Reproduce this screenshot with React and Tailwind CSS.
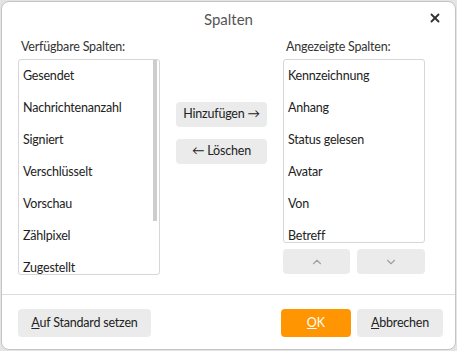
import { X, ChevronUp, ChevronDown } from "lucide-react";

const available = [
  "Gesendet",
  "Nachrichtenanzahl",
  "Signiert",
  "Verschlüsselt",
  "Vorschau",
  "Zählpixel",
  "Zugestellt",
];

const shown = ["Kennzeichnung", "Anhang", "Status gelesen", "Avatar", "Von", "Betreff"];

function Item({ label }) {
  return (
    <div className="h-[32px] shrink-0 flex items-center pl-[4px] text-[12.5px] tracking-[-0.2px] text-[#222] whitespace-nowrap">
      {label}
    </div>
  );
}

function GrayButton({ children, className = "" }) {
  return (
    <button
      className={
        "bg-[#ebebeb] rounded-[4px] text-[12.5px] tracking-[-0.2px] text-[#222] flex items-center justify-center " +
        className
      }
    >
      {children}
    </button>
  );
}

export default function App() {
  return (
    <div
      className="w-[457px] h-[351px] bg-[#e4e4e4] p-[1px]"
      style={{ fontFamily: 'Lato, "Noto Sans", sans-serif' }}
    >
      <div className="w-[455px] h-[349px] bg-white border border-[#c4c4c4] rounded-[8px] flex flex-col overflow-hidden">
        {/* Header */}
        <div className="h-[34px] shrink-0 flex items-center justify-center relative">
          <span className="text-[15px] text-[#555]">Spalten</span>
          <X
            className="absolute right-[13px] top-[9px] text-[#333]"
            size={14}
            strokeWidth={3.2}
          />
        </div>

        {/* Body */}
        <div className="flex pl-[16px] h-[258px] shrink-0">
          {/* Left column */}
          <div className="w-[142px] flex flex-col">
            <div className="h-[23px] flex items-center pl-[3px] text-[12.5px] tracking-[-0.2px] text-[#333]">
              Verfügbare Spalten:
            </div>
            <div className="h-[216px] border border-[#d6d6d6] rounded-[3px] flex overflow-hidden">
              <div className="flex-1 flex flex-col overflow-hidden">
                {available.map((a) => (
                  <Item key={a} label={a} />
                ))}
              </div>
              <div className="w-[4px] mr-[2px]">
                <div className="h-[161px] bg-[#cdcdcd]" />
              </div>
            </div>
          </div>

          {/* Middle */}
          <div className="w-[123px] flex flex-col items-center pt-[66px] gap-[12px]">
            <GrayButton className="w-[91px] h-[25px]">Hinzufügen →</GrayButton>
            <GrayButton className="w-[91px] h-[25px]">← Löschen</GrayButton>
          </div>

          {/* Right column */}
          <div className="w-[142px] flex flex-col">
            <div className="h-[23px] flex items-center pl-[3px] text-[12.5px] tracking-[-0.2px] text-[#333]">
              Angezeigte Spalten:
            </div>
            <div className="h-[184px] border border-[#d6d6d6] rounded-[3px] flex flex-col overflow-hidden">
              {shown.map((s) => (
                <Item key={s} label={s} />
              ))}
            </div>
            <div className="flex gap-[7px] mt-[6px]">
              <GrayButton className="w-[67px] h-[25px]">
                <ChevronUp size={14} className="text-[#a0a0a0]" />
              </GrayButton>
              <GrayButton className="w-[68px] h-[25px]">
                <ChevronDown size={14} className="text-[#a0a0a0]" />
              </GrayButton>
            </div>
          </div>
        </div>

        {/* Divider */}
        <div className="h-px bg-[#dcdcdc] shrink-0" />

        {/* Footer */}
        <div className="flex items-center pl-[16px] pr-[12px] pt-[14px]">
          <GrayButton className="w-[133px] h-[28px]">
            <span>
              <span className="underline">A</span>uf Standard setzen
            </span>
          </GrayButton>
          <div className="flex-1" />
          <button className="w-[70px] h-[28px] bg-[#ff9500] rounded-[4px] text-[12.5px] text-white flex items-center justify-center">
            <span>
              <span className="underline">O</span>K
            </span>
          </button>
          <GrayButton className="w-[86px] h-[28px] ml-[6px]">
            <span>
              <span className="underline">A</span>bbrechen
            </span>
          </GrayButton>
        </div>
      </div>
    </div>
  );
}
